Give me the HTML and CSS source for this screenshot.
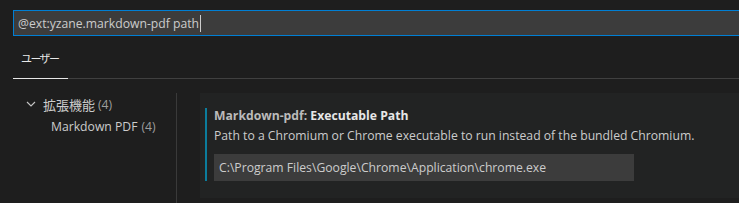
FILE: index.html
```html
<!DOCTYPE html>
<html lang="ja">
<head>
<meta charset="utf-8">
<link rel="stylesheet" href="styles.css">
</head>
<body>
<div class="page">
  <div class="header">
    <div class="search"><span class="query">@ext:yzane.markdown-pdf path</span><span class="caret"></span></div>
    <div class="tabs">
      <div class="tab active">ユーザー</div>
    </div>
  </div>
  <div class="main">
    <div class="tree">
      <div class="row level1">
        <svg class="chevron" width="10" height="6" viewBox="0 0 10 6"><path d="M1 1 L5 5 L9 1" fill="none" stroke="#c5c5c5" stroke-width="1.1"/></svg>
        <span class="label">拡張機能</span><span class="count">(4)</span>
      </div>
      <div class="row level2">
        <span class="label">Markdown PDF</span><span class="count">(4)</span>
      </div>
    </div>
    <div class="separator"></div>
    <div class="panel">
      <div class="setting">
        <div class="title"><span class="category">Markdown-pdf: </span><span class="name">Executable Path</span></div>
        <div class="desc">Path to a Chromium or Chrome executable to run instead of the bundled Chromium.</div>
        <div class="input">C:\Program Files\Google\Chrome\Application\chrome.exe</div>
      </div>
    </div>
  </div>
</div>
</body>
</html>
```
FILE: styles.css
```css
html, body {
  margin: 0;
  padding: 0;
  background: #1e1e1e;
}
.page {
  width: 739px;
  height: 203px;
  overflow: hidden;
  font-family: "Open Sans", "Noto Sans CJK JP", sans-serif;
  font-size: 12.2px;
  color: #cccccc;
}
.header {
  padding: 10px 0 0 13px;
}
.search {
  height: 24px;
  border: 1px solid #007fd4;
  border-right: none;
  background: #3c3c3c;
  display: flex;
  align-items: center;
  padding-left: 4px;
  color: #cccccc;
}
.caret {
  display: inline-block;
  width: 1px;
  height: 17px;
  background: #cccccc;
  margin-left: 1px;
}
.tabs {
  display: flex;
  border-bottom: 1px solid #404040;
  height: 42px;
}
.tab {
  font-family: "Noto Sans CJK JP", sans-serif;
  font-size: 11px;
  letter-spacing: -1.6px;
  color: #e7e7e7;
  padding: 0 10px 0 8px;
  display: flex;
  align-items: center;
  margin-top: 1px;
  margin-bottom: -1px;
  border-bottom: 1px solid #e7e7e7;
}
.main {
  display: flex;
  height: 124px;
}
.tree {
  width: 176px;
  padding-top: 14px;
}
.row {
  height: 22px;
  display: flex;
  align-items: center;
  white-space: nowrap;
}
.level1 {
  padding-left: 26px;
}
.chevron {
  margin-right: 7px;
}
.level2 {
  padding-left: 51px;
}
.label {
  color: #cccccc;
  margin-right: 4px;
}
.level1 .label {
  font-family: "Noto Sans CJK JP", sans-serif;
  font-size: 13px;
  margin-right: 3px;
}
.count {
  color: #9d9d9d;
}
.separator {
  width: 1px;
  background: #3a3a3a;
  margin-top: 14px;
}
.panel {
  flex: 1;
  margin: 14px 0 5px 23px;
  background: #222323;
  padding: 15px 0 0 5px;
}
.setting {
  border-left: 2px solid #0c7d9d;
  padding-left: 7px;
}
.title {
  font-weight: bold;
  line-height: 14px;
  padding-top: 1px;
}
.category {
  color: #bbbbbb;
}
.name {
  color: #e7e7e7;
}
.desc {
  margin-top: 4px;
  line-height: 18px;
  white-space: nowrap;
}
.input {
  margin-top: 9px;
  width: 415px;
  height: 27px;
  background: #3c3c3c;
  padding-left: 5px;
  display: flex;
  align-items: center;
  white-space: nowrap;
}
```
